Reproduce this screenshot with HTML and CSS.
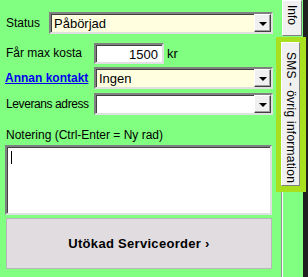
FILE: index.html
```html
<!DOCTYPE html>
<html lang="sv">
<head>
<meta charset="utf-8">
<link rel="stylesheet" href="styles.css">
</head>
<body>
<div class="page">
  <div class="main">
    <div class="row r1">
      <span class="lbl">Status</span>
      <div class="combo status yellow"><span class="val">Påbörjad</span><span class="dd"><i></i></span></div>
    </div>
    <div class="row r2">
      <span class="lbl">Får max kosta</span>
      <div class="num">1500</div><span class="unit">kr</span>
    </div>
    <div class="row r3">
      <a class="link" href="#">Annan kontakt</a>
      <div class="combo yellow"><span class="val">Ingen</span><span class="dd"><i></i></span></div>
    </div>
    <div class="row r4">
      <span class="lbl tight">Leverans adress</span>
      <div class="combo white"><span class="val"></span><span class="dd"><i></i></span></div>
    </div>
    <div class="note-lbl">Notering (Ctrl-Enter = Ny rad)</div>
    <div class="note"><span class="caret"></span></div>
    <button class="big">Utökad Serviceorder ›</button>
  </div>
  <div class="tabs">
    <div class="tab info"><span>Info</span></div>
    <div class="sel"><div class="tab sms"><span>SMS - övrig information</span></div></div>
    <div class="rest"></div>
  </div>
  <div class="edge"></div>
</div>
</body>
</html>
```
FILE: styles.css
```css
* { box-sizing: border-box; }
html, body { margin: 0; padding: 0; }
body {
  background: #80ff80;
  font-family: "Liberation Sans", Arial, sans-serif;
  font-size: 12px;
  color: #000;
  overflow: hidden;
}
.page {
  display: flex;
  height: 277px;
}
.main {
  width: 275px;
  padding-left: 5px;
  display: flex;
  flex-direction: column;
}
.row {
  display: flex;
  align-items: center;
  height: 22px;
}
.r1 { margin-top: 12px; }
.r2 { margin-top: 8px; }
.r3 { margin-top: 3px; }
.r4 { margin-top: 4px; }
.lbl {
  width: 89px;
  flex-shrink: 0;
  padding-left: 1px;
  white-space: nowrap;
}
.lbl.tight { letter-spacing: -0.4px; }
.r1 .lbl { width: 44px; }
.link {
  width: 89px;
  flex-shrink: 0;
  white-space: nowrap;
  color: #0000ee;
  font-weight: bold;
  font-size: 12px;
  text-decoration: underline;
}
.combo {
  width: 179px;
  flex-shrink: 0;
  height: 22px;
  display: flex;
  border: 2px solid;
  border-color: #808080 #e0e0e0 #e0e0e0 #808080;
  box-shadow: inset 1px 1px 0 #404040;
}
.combo.status { width: 224px; }
.yellow { background: #ffffe0; }
.white { background: #fff; }
.val {
  flex: 1;
  padding: 3px 0 0 3px;
  font-size: 13px;
  line-height: 14px;
}
.dd {
  width: 17px;
  height: 18px;
  background: #f0f0f0;
  border: 1px solid;
  border-color: #ffffff #404040 #404040 #ffffff;
  box-shadow: inset -1px -1px 0 #a0a0a0;
  display: flex;
  align-items: center;
  justify-content: center;
}
.dd i {
  display: block;
  width: 0; height: 0;
  border-left: 4px solid transparent;
  border-right: 4px solid transparent;
  border-top: 4px solid #000;
  margin-top: 1px;
}
.num {
  width: 70px;
  flex-shrink: 0;
  height: 21px;
  background: #fff;
  border: 2px solid;
  border-color: #808080 #e0e0e0 #e0e0e0 #808080;
  box-shadow: inset 1px 1px 0 #404040;
  text-align: right;
  padding: 2px 4px 0 0;
  font-size: 13px;
  line-height: 15px;
}
.unit { margin-left: 3px; font-size: 13px; }
.note-lbl {
  margin-top: 13px;
  line-height: 14px;
  height: 14px;
  padding-left: 1px;
}
.note {
  margin-top: 3px;
  width: 267px;
  height: 70px;
  background: #fff;
  border: 2px solid;
  border-color: #808080 #e0e0e0 #e0e0e0 #808080;
  box-shadow: inset 1px 1px 0 #404040;
  padding: 4px 0 0 4px;
}
.caret {
  display: block;
  width: 1px;
  height: 13px;
  background: #000;
}
.big {
  margin: 3px 0 0 1px;
  width: 266px;
  height: 51px;
  background: #e0dce0;
  border: 1px solid #b8b8b8;
  font-family: "Liberation Sans", Arial, sans-serif;
  font-weight: bold;
  font-size: 13px;
  letter-spacing: 0.3px;
  color: #000;
  padding: 0;
}
.tabs {
  width: 28px;
  display: flex;
  flex-direction: column;
  position: relative;
  z-index: 1;
}
.tab {
  background: #f0f0f0;
  border: 1px solid;
  border-color: #ffffff #808080 #808080 #ffffff;
  writing-mode: vertical-rl;
  font-size: 12px;
  display: flex;
  align-items: center;
  justify-content: flex-start;
  color: #000;
}
.info {
  margin-left: 7px;
  width: 20px;
  height: 36px;
  padding-top: 4px;
}
.sel {
  margin-top: 1px;
  margin-left: 1px;
  width: 30px;
  height: 155px;
  background: #a8e020;
  padding: 5px 0 0 5px;
}
.sms {
  width: 19px;
  height: 144px;
  padding-top: 9px;
  letter-spacing: 0.25px;
}
.rest {
  flex: 1;
  margin-left: 6px;
  border-left: 1px solid #909090;
  box-shadow: inset 1px 0 0 #fff;
}
.edge {
  width: 5px;
  background: #202020;
}
```
